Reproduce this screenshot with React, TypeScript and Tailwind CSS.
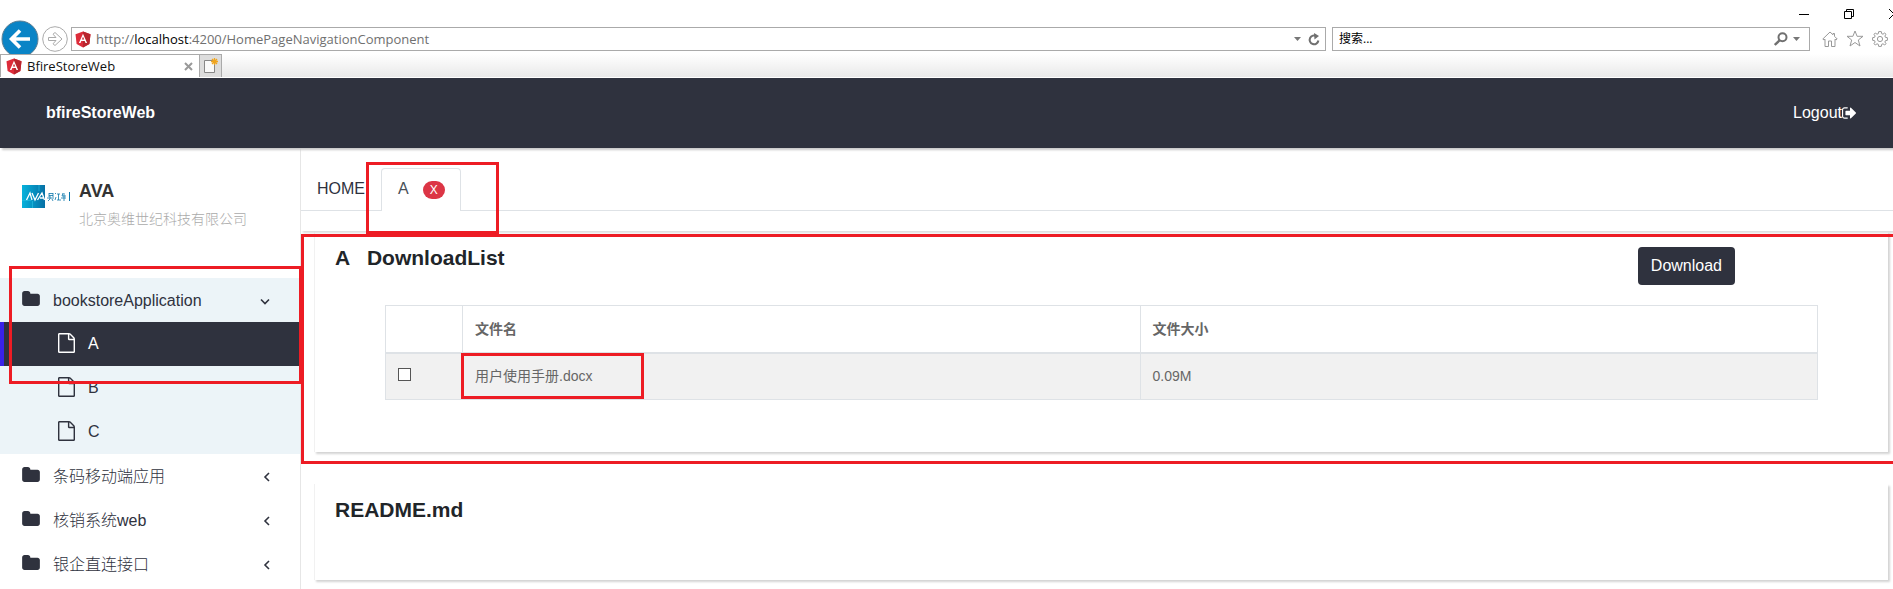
import type { ReactNode } from "react";

const MARK = "pointer-events-none absolute z-20 border-3 border-[#ed1c24]";

function AngularIcon() {
  return (
    <svg viewBox="0 0 16 17" className="h-[17px] w-4 shrink-0" aria-hidden="true">
      <path d="M8 0.5L15.5 3.2L14.4 13L8 16.5L1.6 13L0.5 3.2Z" fill="#dd2c3a" />
      <path d="M8 0.5L15.5 3.2L14.4 13L8 16.5Z" fill="#b9252e" />
      <path d="M8 2.8L3.9 12H5.5L6.3 9.9H9.7L10.5 12H12.1ZM8 5.7L9.2 8.6H6.8Z" fill="#fff" fillRule="evenodd" />
    </svg>
  );
}

function FolderIcon() {
  return (
    <svg viewBox="64 128 1664 1408" className="h-[15px] w-[18px] shrink-0 fill-[#2f323e]" aria-hidden="true">
      <path d="M1728 608v704q0 92-66 158t-158 66h-1216q-92 0-158-66t-66-158v-960q0-92 66-158t158-66h320q92 0 158 66t66 158v32h672q92 0 158 66t66 158z" />
    </svg>
  );
}

function FileIcon() {
  return (
    <svg viewBox="0 0 1536 1792" className="h-5 w-[17px] shrink-0 fill-current" aria-hidden="true">
      <path d="M1468 380q28 28 48 76t20 88v1152q0 40-28 68t-68 28h-1344q-40 0-68-28t-28-68v-1600q0-40 28-68t68-28h896q40 0 88 20t76 48zm-444-244v376h376q-10-29-22-41l-313-313q-12-12-41-22zm384 1528v-1024h-416q-40 0-68-28t-28-68v-416h-768v1536h1280z" />
    </svg>
  );
}

function SignOutIcon() {
  return (
    <svg viewBox="64 256 1568 1280" className="h-3 w-[14px] fill-white" aria-hidden="true">
      <path d="M704 1440q0 4 1 20t.5 26.5-3 23.5-10 19.5-20.5 6.5h-320q-119 0-203.5-84.5t-84.5-203.5v-704q0-119 84.5-203.5t203.5-84.5h320q13 0 22.5 9.5t9.5 22.5q0 4 1 20t.5 26.5-3 23.5-10 19.5-20.5 6.5h-320q-66 0-113 47t-47 113v704q0 66 47 113t113 47h312l11.5 1 11.5 3 8 5.5 7 9 2 13.5zm928-544q0 26-19 45l-544 544q-19 19-45 19t-45-19-19-45v-288h-448q-26 0-45-19t-19-45v-384q0-26 19-45t45-19h448v-288q0-26 19-45t45-19 45 19l544 544q19 19 19 45z" />
    </svg>
  );
}

function Caret() {
  return (
    <svg viewBox="0 0 7 4" className="h-1 w-[7px] fill-[#777]" aria-hidden="true">
      <path d="M0 0H7L3.5 4Z" />
    </svg>
  );
}

function BrowserChrome() {
  return (
    <div className="bg-white font-['Open_Sans','Noto_Sans_CJK_SC',sans-serif] text-[#111]">
      <div className="flex h-[27px] items-center justify-end gap-[35px] overflow-hidden pt-px">
        <button aria-label="Minimize" className="flex">
          <svg viewBox="0 0 10 10" className="h-[10px] w-[10px]" fill="none" stroke="#000"><path d="M0 5.5H10" /></svg>
        </button>
        <button aria-label="Restore" className="flex">
          <svg viewBox="0 0 10 10" className="h-[10px] w-[10px]" fill="none" stroke="#000"><path d="M0.5 2.5H7.5V9.5H0.5ZM2.5 2.5V0.5H9.5V7.5H7.5" /></svg>
        </button>
        <button aria-label="Close" className="flex w-1 overflow-hidden">
          <svg viewBox="0 0 10 10" className="h-[10px] w-[10px] shrink-0" fill="none" stroke="#000"><path d="M0 0L10 10M10 0L0 10" /></svg>
        </button>
      </div>
      <div className="flex h-[27px] items-start pr-[5px]">
        <button aria-label="Back" className="relative -mt-[7px] ml-px shrink-0">
          <svg viewBox="0 0 38 38" className="h-[38px] w-[38px]" aria-hidden="true">
            <circle cx="19" cy="19" r="18" fill="#0a84c6" stroke="#5d7f93" />
            <path d="M29 19H11M19 10.5L10.5 19L19 27.5" fill="none" stroke="#fff" strokeWidth="3.6" />
          </svg>
        </button>
        <button aria-label="Forward" className="ml-[3px] -mt-px shrink-0">
          <svg viewBox="0 0 26 26" className="h-[26px] w-[26px]" fill="none" stroke="#aaa" aria-hidden="true">
            <circle cx="13" cy="13" r="12.3" />
            <path d="M6.5 11.5H14L11 8.2L13 6.5L20 13L13 19.5L11 17.8L14 14.5H6.5Z" />
          </svg>
        </button>
        <div className="ml-[3px] flex h-6 flex-1 items-center border border-[#aaa] pr-[5px] pl-[3px]">
          <AngularIcon />
          <div className="ml-[5px] flex-1 text-[13px] leading-5 text-[#707070]">
            http://<span className="text-black">localhost</span>:4200/HomePageNavigationComponent
          </div>
          <Caret />
          <button aria-label="Refresh" className="ml-[7px]">
            <svg viewBox="0 0 12 13" className="h-[13px] w-3" fill="none" stroke="#707070" strokeWidth="2" aria-hidden="true">
              <path d="M8.5 3.2A4.4 4.4 0 1 0 10.4 7.5" />
              <path d="M6 0L11 3L6.5 6.5Z" fill="#707070" stroke="none" />
            </svg>
          </button>
        </div>
        <div className="ml-[6px] flex h-6 w-[478px] items-center border border-[#aaa] pr-[9px] pl-[6px]">
          <input aria-label="Search" placeholder="搜索..." className="min-w-0 flex-1 text-xs outline-none placeholder:text-black" />
          <svg viewBox="0 0 14 14" className="h-[14px] w-[14px]" fill="none" stroke="#707070" strokeWidth="2" aria-hidden="true">
            <circle cx="8.5" cy="5.3" r="4" />
            <path d="M5.8 8.2L0.8 13" strokeWidth="2.4" />
          </svg>
          <span className="ml-[5px]"><Caret /></span>
        </div>
        <div className="ml-3 flex h-[23px] items-center gap-2">
          <button aria-label="Home">
            <svg viewBox="0 0 16 16" className="h-4 w-4" fill="none" stroke="#999" aria-hidden="true">
              <path d="M8 1L0.8 8L2 9L3 8.2V15.5H6.5V10H9.5V15.5H13V8.2L14 9L15.2 8L12.5 5.3V2.5H11V3.8Z" />
            </svg>
          </button>
          <button aria-label="Favorites">
            <svg viewBox="0 0 18 17" className="h-[17px] w-[18px]" fill="none" stroke="#999" aria-hidden="true">
              <path d="M9 1L11.1 6.3H17L12.3 10L14 16L9 12.5L4 16L5.7 10L1 6.3H6.9Z" />
            </svg>
          </button>
          <button aria-label="Tools">
            <svg viewBox="0 0 16 16" className="h-4 w-4" fill="none" stroke="#999" aria-hidden="true">
              <path d="M6.7 0.6H9.3L9.7 2.7L11 3.2L12.7 2L14 3.3L12.9 5L13.4 6.3L15.4 6.7V9.3L13.4 9.7L12.9 11L14 12.7L12.7 14L11 12.8L9.7 13.3L9.3 15.4H6.7L6.3 13.3L5 12.8L3.3 14L2 12.7L3.1 11L2.6 9.7L0.6 9.3V6.7L2.6 6.3L3.1 5L2 3.3L3.3 2L5 3.2L6.3 2.7Z" />
              <circle cx="8" cy="8" r="2.6" />
            </svg>
          </button>
        </div>
      </div>
      <div className="relative flex h-6 border-b border-white bg-linear-to-b from-white to-[#e9e9e9]">
        <div className="flex w-[200px] items-center border border-b-0 border-[#aaa] bg-white pr-[6px] pl-[5px]">
          <AngularIcon />
          <span className="ml-[5px] flex-1 text-[13px] leading-5">BfireStoreWeb</span>
          <button aria-label="Close tab">
            <svg viewBox="0 0 9 9" className="h-[9px] w-[9px]" fill="none" stroke="#999" strokeWidth="2"><path d="M1 1L8 8M8 1L1 8" /></svg>
          </button>
        </div>
        <button aria-label="New tab" className="flex w-[22px] items-center justify-center border border-b-0 border-l-0 border-[#aaa] bg-[#ddd]">
          <svg viewBox="0 0 14 16" className="h-4 w-[14px]" aria-hidden="true">
            <path d="M0.5 2.5H10.5V14.5H0.5Z" fill="#fafafa" stroke="#888" />
            <path d="M10.5 0V7M7 3.5H14M8 1L13 6M13 1L8 6" stroke="#f0a51e" strokeWidth="1.3" />
          </svg>
        </button>
      </div>
    </div>
  );
}

function Logo() {
  return (
    <svg viewBox="0 0 48 23" className="h-[23px] w-12 shrink-0" aria-hidden="true">
      <defs>
        <linearGradient id="logo" x1="0" x2="1">
          <stop offset="0" stopColor="#06b2dc" />
          <stop offset="1" stopColor="#0670a5" />
        </linearGradient>
      </defs>
      <rect width="23" height="23" fill="url(#logo)" />
      <path d="M0 15.5H9M10.5 16V23M17 0V6" stroke="#24bde0" strokeWidth="0.7" />
      <path d="M4.5 15L8 8L10 15M10 8L13 15L16.5 8M15.5 15L20 8L22.5 15M18 13H22" fill="none" stroke="#fff" strokeWidth="1.3" />
      <path d="M27 8.5H31M27 10.5H31M27 8V12M31 8V12M25 13H32M28 11V14L26 16M30 14L31 16M33 8L34 9M33 15L34 12M35 9H38M36.5 9V15M35 15H39M41 8L40 11H44M42 8V16M39 13H44" fill="none" stroke="#0a76ab" strokeWidth="0.8" />
      <path d="M47.5 7V16" stroke="#0a76ab" />
    </svg>
  );
}

function GroupItem({ label, open = false }: { label: string; open?: boolean }) {
  return (
    <button aria-expanded={open} className={`flex h-11 w-full items-center pr-[30px] pl-[22px] text-left ${open ? "bg-[#ecf4f8]" : ""}`}>
      <span className="pb-1"><FolderIcon /></span>
      <span className="ml-[13px] flex-1 pt-px">{label}</span>
      <svg viewBox="0 0 10 10" className="mt-0.5 h-[10px] w-[10px]" fill="none" stroke="#2f323e" strokeWidth="1.6" aria-hidden="true">
        {open ? <path d="M1 3.5L5 7.5L9 3.5" /> : <path d="M9 1L5 5L9 9" />}
      </svg>
    </button>
  );
}

function ChildItem({ label, active = false }: { label: string; active?: boolean }) {
  return (
    <a
      href="#"
      className={`flex h-11 items-center gap-[13px] border-l-4 pl-[54px] ${active ? "border-[#3a22e8] bg-[#2f323e] text-white" : "border-[#ecf4f8] bg-[#ecf4f8]"}`}
    >
      <span className="pb-[3px]"><FileIcon /></span>
      {label}
    </a>
  );
}

function Card({ children, className }: { children: ReactNode; className: string }) {
  return (
    <section className={`relative mr-[5px] ml-[13px] border-l border-[#f1f1f1] bg-white pl-5 shadow-[2px_2px_2px_#d4d4d4] ${className}`}>
      {children}
    </section>
  );
}

export default function App() {
  return (
    <div className="flex min-h-screen flex-col overflow-hidden bg-white font-['Liberation_Sans','Noto_Sans_CJK_SC',sans-serif] text-base text-[#2f323e]">
      <BrowserChrome />
      <header className="relative z-10 flex h-[70px] items-center justify-between bg-[#2f323e] pr-[37px] pl-[46px] text-white shadow-[2px_2px_2px_#c8c8c8]">
        <h1 className="font-bold">bfireStoreWeb</h1>
        <a href="#" className="flex items-center">Logout<SignOutIcon /></a>
      </header>
      <div className="flex flex-1">
        <aside className="relative w-[301px] shrink-0 border-r border-[#e6e6e6]">
          <div className="flex h-[130px] items-start pt-[31px] pl-[22px]">
            <div className="pt-[6px]"><Logo /></div>
            <div className="ml-[9px]">
              <p className="text-lg leading-6 font-bold text-[#333]">AVA</p>
              <p className="mt-1 text-sm leading-6 font-light text-[#aaa]">北京奥维世纪科技有限公司</p>
            </div>
          </div>
          <nav className="font-light">
            <GroupItem label="bookstoreApplication" open />
            <ChildItem label="A" active />
            <ChildItem label="B" />
            <ChildItem label="C" />
            <GroupItem label="条码移动端应用" />
            <GroupItem label="核销系统web" />
            <GroupItem label="银企直连接口" />
          </nav>
          <div className={`${MARK} top-[118px] -right-[2px] left-[9px] h-[118px]`} />
        </aside>
        <main className="min-w-0 flex-1">
          <div className="relative z-10 h-[83px] pt-5 shadow-[2px_2px_2px_#ddd]">
            <div className="flex h-[43px] border-b border-[#dee2e6]">
              <a href="#" className="w-20 pt-[9px] pl-4 leading-6">HOME</a>
              <div className="-mb-px flex w-20 items-start rounded-t border border-b-0 border-[#dee2e6] bg-white pl-4">
                <a href="#" className="pt-2 leading-6 text-[#495057]">A</a>
                <button aria-label="Close A" className="mt-3 ml-[14px] h-[18px] w-[22px] rounded-full bg-[#dc3545] text-xs leading-[18px] text-white">X</button>
              </div>
            </div>
            <div className={`${MARK} top-[14px] left-[65px] h-[72px] w-[133px]`} />
          </div>
          <div className="relative">
            <Card className="h-[221px] pt-[11px]">
              <div className="flex items-start justify-between pr-[153px]">
                <h2 className="text-[21px] leading-8 font-bold whitespace-pre text-[#212529]">A   DownloadList</h2>
                <button className="mt-[5px] h-[38px] rounded bg-[#2f323e] px-[13px] text-white">Download</button>
              </div>
              <div className="mt-5 mr-[70px] ml-[50px]">
                <table className="w-full table-fixed border-collapse text-left text-sm text-[#666]">
                  <thead>
                    <tr className="h-[47px]">
                      <th className="w-[77px] border border-b-2 border-[#dee2e6]" />
                      <th className="border border-b-2 border-[#dee2e6] px-3">文件名</th>
                      <th className="border border-b-2 border-[#dee2e6] px-3">文件大小</th>
                    </tr>
                  </thead>
                  <tbody>
                    <tr className="h-[47px] bg-[#f1f1f1]">
                      <td className="border border-[#dee2e6] px-3 align-middle">
                        <input type="checkbox" aria-label="用户使用手册.docx" className="mb-1 block h-[13px] w-[13px] appearance-none border border-[#555] bg-white checked:bg-[#2f323e]" />
                      </td>
                      <td className="relative border border-[#dee2e6] px-3">
                        用户使用手册.docx
                        <div className={`${MARK} -top-px -left-[2px] h-[46px] w-[183px]`} />
                      </td>
                      <td className="border border-[#dee2e6] px-3">0.09M</td>
                    </tr>
                  </tbody>
                </table>
              </div>
            </Card>
            <div className={`${MARK} top-[3px] -right-1 left-0 h-[230px]`} />
          </div>
          <Card className="mt-8 h-[96px] pt-[10px]">
            <h2 className="text-[21px] leading-8 font-bold text-[#212529]">README.md</h2>
          </Card>
        </main>
      </div>
    </div>
  );
}
